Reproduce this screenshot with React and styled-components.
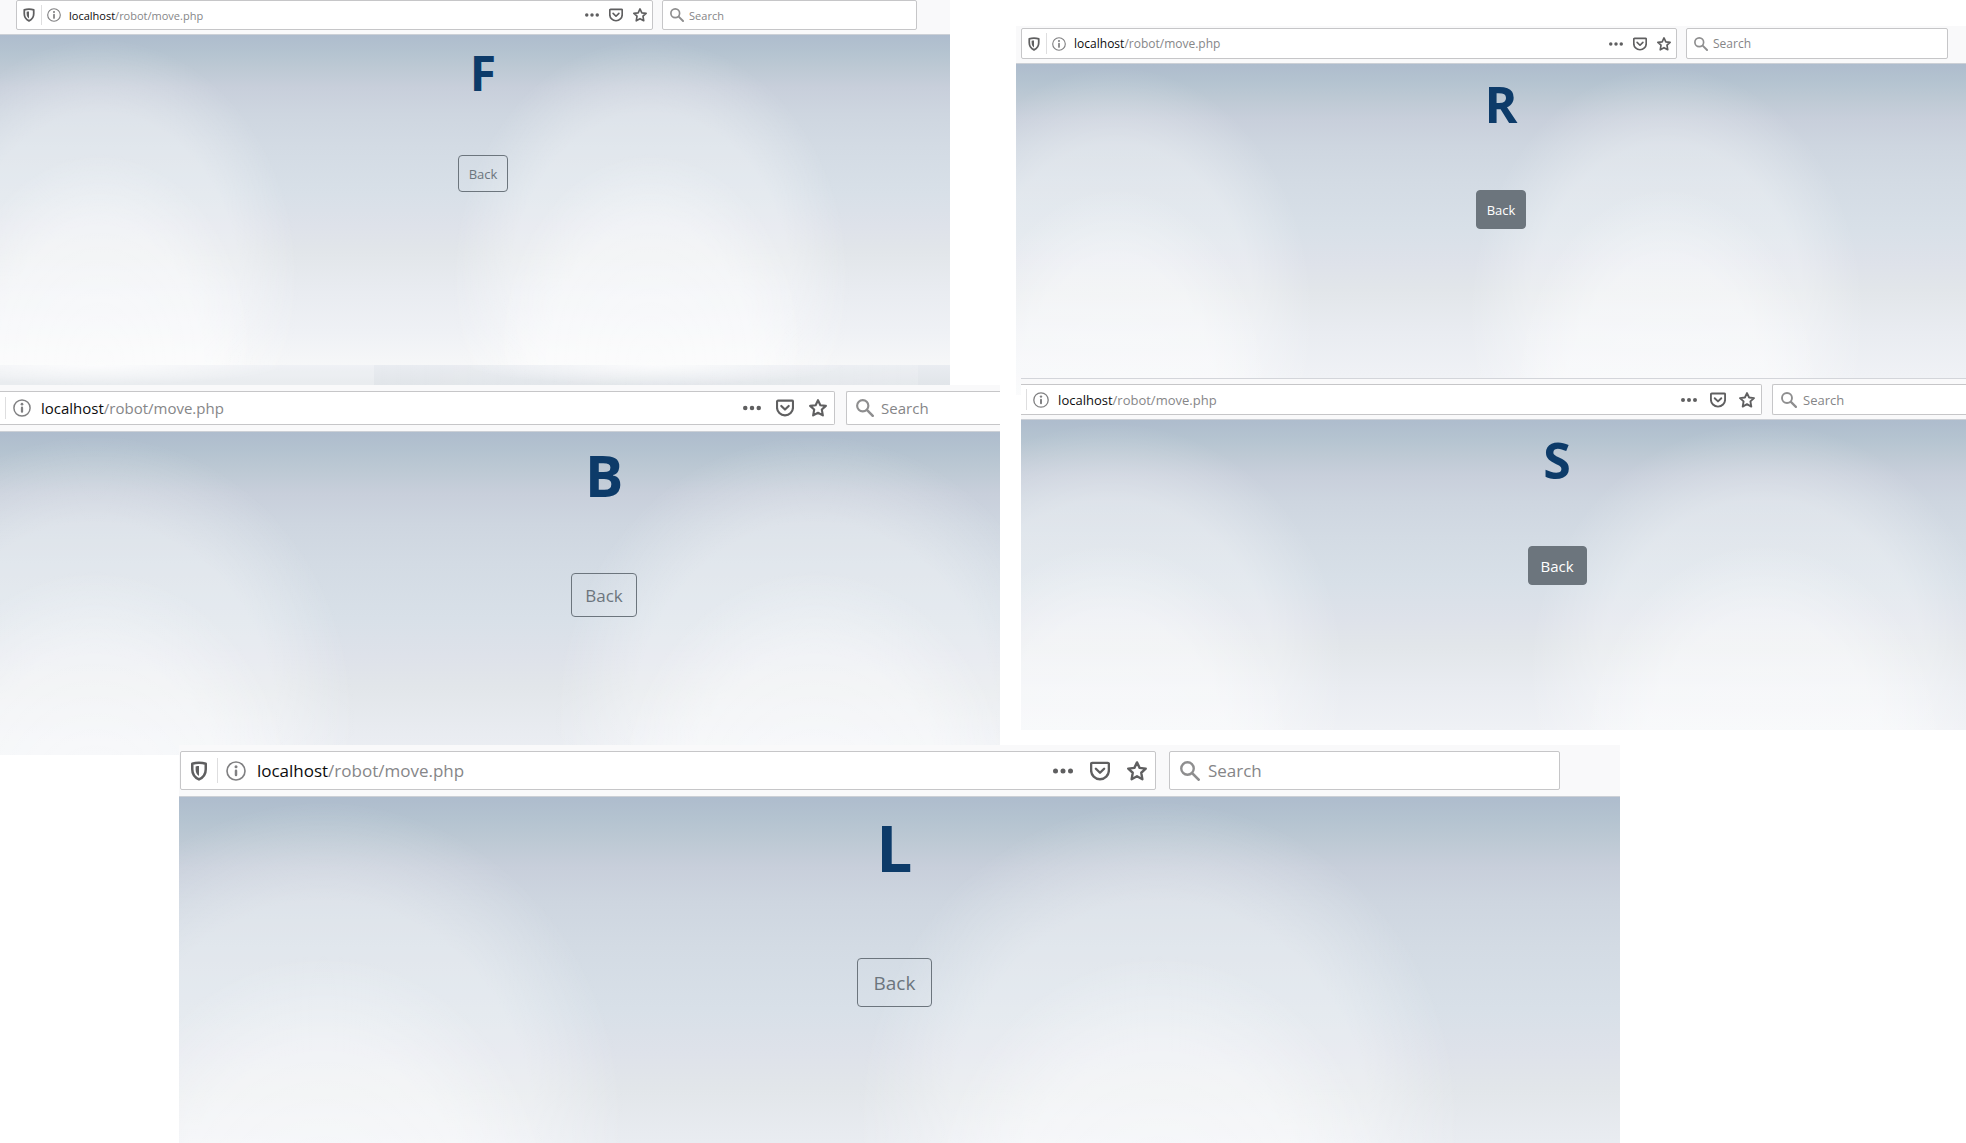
import React from 'react';
import styled, { createGlobalStyle, css } from 'styled-components';

const GlobalStyle = createGlobalStyle`
  *, *::before, *::after { box-sizing: border-box; }
  body {
    margin: 0;
    background: #fff;
    font-family: "Open Sans", "Noto Sans", sans-serif;
  }
  button, input { font: inherit; }
`;

/* Each window is the same page seen at another zoom level. */
const sizes = {
  xs: { text: 11, label: 13, icon: 14, gap: 5, action: 10, box: 30, title: 48, titleLine: 58, top: 9, drop: 53, btnW: 50, btnH: 37, tile: 330 },
  sm: { text: 12, label: 13, icon: 14, gap: 5, action: 10, box: 31, title: 50, titleLine: 60, top: 10, drop: 56, btnW: 50, btnH: 39, tile: 344 },
  md: { text: 13, label: 15, icon: 16, gap: 6, action: 13, box: 31, title: 50, titleLine: 60, top: 10, drop: 56, btnW: 59, btnH: 39, tile: 344 },
  lg: { text: 15, label: 17, icon: 18, gap: 7, action: 15, box: 34, title: 57, titleLine: 68, top: 9, drop: 64, btnW: 66, btnH: 44, tile: 387 },
  xl: { text: 17, label: 19, icon: 20, gap: 8, action: 17, box: 39, title: 64, titleLine: 76, top: 13, drop: 72, btnW: 75, btnH: 49, tile: 442 },
};

const Desktop = styled.main`
  display: flex;
  flex-direction: column;
  overflow: hidden;
`;

const TopRow = styled.div`
  display: grid;
  grid-template-columns: 50.87% 1fr;
  align-items: start;
`;

const LeftColumn = styled.div`
  display: flex;
  flex-direction: column;
`;

const RightColumn = styled.div`
  display: flex;
  flex-direction: column;
  padding: 26px 0 0 16px;
`;

const Window = styled.section`
  width: ${(p) => p.$width || 'auto'};
  margin: ${(p) => p.$margin || '0'};
`;

const Toolbar = styled.header`
  display: flex;
  gap: ${(p) => p.$gap}px;
  padding: ${(p) => p.$padding};
  background: #f9f9fa;
  border-top: ${(p) => (p.$line ? '1px solid #d3d5da' : 'none')};
  border-bottom: 1px solid #ccd0d6;
`;

const field = css`
  display: flex;
  align-items: center;
  min-width: 0;
  height: ${(p) => p.$s.box}px;
  background: #fff;
  border: 1px solid #c6c6c8;
  border-radius: 2px;
`;

const AddressBar = styled.div`
  ${field}
  flex: 1;
  gap: ${(p) => p.$s.gap}px;
  padding: 0 ${(p) => p.$s.gap}px;
  ${(p) => p.$cut && css`
    border-left: 0;
    border-radius: 0 2px 2px 0;
    padding-left: 5px;
  `}
`;

const SearchBox = styled.label`
  ${field}
  flex: 0 0 ${(p) => p.$width}px;
  gap: ${(p) => p.$s.gap}px;
  padding-left: ${(p) => p.$s.gap + 2}px;
  color: #8e8e8f;
  ${(p) => p.$cut && css`
    border-right: 0;
    border-radius: 2px 0 0 2px;
  `}
`;

const SearchInput = styled.input`
  flex: 1;
  width: 0;
  min-width: 0;
  padding: 0;
  border: 0;
  outline: 0;
  background: none;
  font-size: ${(p) => p.$s.text}px;
  color: #1a1a1a;
  &::placeholder { color: #858587; opacity: 1; }
`;

const Address = styled.a`
  flex: 1;
  padding-left: 3px;
  font-size: ${(p) => p.$s.text}px;
  white-space: nowrap;
  color: #868688;
  text-decoration: none;
`;

const Host = styled.span`
  color: #0c0c0d;
`;

const Separator = styled.span`
  width: 1px;
  height: 70%;
  background: #dededf;
`;

const IconButton = styled.button`
  display: flex;
  padding: 0;
  border: 0;
  background: none;
  color: ${(p) => (p.$soft ? '#808082' : '#5f5f60')};
`;

const Actions = styled.div`
  display: flex;
  gap: ${(p) => p.$s.action}px;
`;

const Glyph = styled.svg`
  display: block;
  flex: none;
  width: ${(p) => p.$s.icon}px;
  height: ${(p) => p.$s.icon}px;
  fill: none;
  stroke: currentColor;
  stroke-width: 1.9;
  stroke-linecap: round;
  stroke-linejoin: round;
`;

const glow = (center, period, tile) => `
  radial-gradient(ellipse ${period * 0.28}% ${Math.round(tile * 0.64)}px at ${center}% ${Math.round(tile)}px,
    rgba(255,255,255,.42) 0, rgba(255,255,255,.38) 66%, rgba(255,255,255,.18) 84%, rgba(255,255,255,0) 100%),
  radial-gradient(ellipse ${period * 0.36}% ${Math.round(tile * 0.74)}px at ${center}% ${Math.round(tile * 0.75)}px,
    rgba(255,255,255,.32) 0, rgba(255,255,255,.32) 70%, rgba(255,255,255,.15) 86%, rgba(255,255,255,0) 100%)
`;

const View = styled.div`
  display: flex;
  flex-direction: column;
  align-items: center;
  gap: ${(p) => p.$s.drop}px;
  min-height: ${(p) => p.$height}px;
  padding: ${(p) => p.$s.top}px ${(p) => p.$right || 0}px 0 ${(p) => p.$left || 0}px;
  background:
    ${(p) => glow(p.$first, p.$period, p.$s.tile)},
    ${(p) => glow(p.$first + p.$period, p.$period, p.$s.tile)},
    linear-gradient(#aebccd 0, #b4c3d0 5%, #bdc9d4 10%, #c8cfdb 16%, #ced6e0 24%, #d3dbe4 34%,
      #d8e0e8 48%, #dee2ea 58%, #e2e6ea 66%, #e9ecf1 78%, #eff1f5 90%, #f6f7f8 100%);
  background-size: 100% ${(p) => p.$s.tile}px;
`;

const Title = styled.h1`
  margin: 0;
  font-size: ${(p) => p.$s.title}px;
  line-height: ${(p) => p.$s.titleLine}px;
  font-weight: 700;
  color: #0d3b69;
`;

const BackButton = styled.button`
  width: ${(p) => p.$s.btnW}px;
  height: ${(p) => p.$s.btnH}px;
  padding: 0;
  border: 1px solid #6c757d;
  border-radius: 4px;
  font-size: ${(p) => p.$s.label}px;
  background: ${(p) => (p.$filled ? '#6c757d' : 'transparent')};
  color: ${(p) => (p.$filled ? '#fff' : '#6c757d')};
`;

const RepeatEdge = styled.div`
  height: 20px;
  background:
    radial-gradient(ellipse 20% 20px at 10% 0, rgba(255,255,255,.8), rgba(255,255,255,0)),
    radial-gradient(ellipse 20% 20px at 69% 0, rgba(255,255,255,.8), rgba(255,255,255,0)),
    linear-gradient(90deg, rgba(255,255,255,.25) 39.4%, rgba(255,255,255,0) 39.4%, rgba(255,255,255,.15) 96.6%, rgba(255,255,255,0) 96.6%),
    linear-gradient(#e9ecf1, #e1e5e9);
`;

const Shield = ({ s }) => (
  <Glyph $s={s} viewBox="0 0 16 16" aria-hidden="true">
    <path strokeWidth="2" d="M8 1.3c2 0 3.8.3 5.4.9v4.3c0 4-2 6.6-5.4 8.2-3.4-1.6-5.4-4.2-5.4-8.2V2.2C4.2 1.6 6 1.3 8 1.3z" />
    <path fill="currentColor" stroke="none" d="M8 4v8c-1.9-1.2-2.7-3-2.7-5.3V4.4C6.1 4.1 7 4 8 4z" />
  </Glyph>
);

const Info = ({ s }) => (
  <Glyph $s={s} viewBox="0 0 16 16" aria-hidden="true">
    <circle cx="8" cy="8" r="7.2" strokeWidth="1.3" />
    <circle cx="8" cy="4.6" r="1.2" fill="currentColor" stroke="none" />
    <path strokeWidth="2" d="M8 7.7v3.6" />
  </Glyph>
);

const Dots = ({ s }) => (
  <Glyph $s={s} viewBox="0 0 16 16" aria-hidden="true">
    <g fill="currentColor" stroke="none">
      <circle cx="2" cy="8" r="2" />
      <circle cx="8" cy="8" r="2" />
      <circle cx="14" cy="8" r="2" />
    </g>
  </Glyph>
);

const Pocket = ({ s }) => (
  <Glyph $s={s} viewBox="0 0 16 16" aria-hidden="true">
    <path d="M1.8 1.5h12.4c.5 0 .9.4.9.9V7.5a7.1 7.1 0 0 1-14.2 0V2.4c0-.5.4-.9.9-.9z" />
    <path d="M4.7 6.2 8 9.4l3.3-3.2" />
  </Glyph>
);

const Star = ({ s }) => (
  <Glyph $s={s} viewBox="0 0 16 16" aria-hidden="true">
    <path d="m8 1.1 2.1 4.4 4.9.6-3.6 3.3.9 5.2L8 12.2l-4.3 2.4.9-5.2L1 6.1l4.9-.6z" />
  </Glyph>
);

const Magnifier = ({ s }) => (
  <Glyph $s={s} viewBox="0 0 16 16" aria-hidden="true">
    <circle cx="6" cy="6" r="5" />
    <path strokeWidth="2.2" d="m9.9 9.9 5 5" />
  </Glyph>
);

function BrowserWindow({ letter, size, filled, cut, cutSearch, toolbar, search, view, width, margin, children }) {
  const s = sizes[size];
  return (
    <Window $width={width} $margin={margin}>
      <Toolbar $gap={toolbar.gap} $padding={toolbar.padding} $line={toolbar.line}>
        <AddressBar $s={s} $cut={cut}>
          {!cut && (
            <IconButton type="button" aria-label="Tracking protection"><Shield s={s} /></IconButton>
          )}
          <Separator />
          <IconButton type="button" $soft aria-label="Site information"><Info s={s} /></IconButton>
          <Address $s={s} href="#move"><Host>localhost</Host>/robot/move.php</Address>
          <Actions $s={s}>
            <IconButton type="button" aria-label="Page actions"><Dots s={s} /></IconButton>
            <IconButton type="button" aria-label="Save to Pocket"><Pocket s={s} /></IconButton>
            <IconButton type="button" aria-label="Bookmark this page"><Star s={s} /></IconButton>
          </Actions>
        </AddressBar>
        <SearchBox $s={s} $width={search} $cut={cutSearch}>
          <Magnifier s={s} />
          <SearchInput $s={s} type="text" placeholder="Search" aria-label="Search" />
        </SearchBox>
      </Toolbar>
      <View $s={s} $height={view.height} $left={view.left} $right={view.right} $first={view.first} $period={view.period}>
        <Title $s={s}>{letter}</Title>
        <BackButton type="button" $s={s} $filled={filled}>Back</BackButton>
      </View>
      {children}
    </Window>
  );
}

export default function App() {
  return (
    <>
      <GlobalStyle />
      <Desktop>
        <TopRow>
          <LeftColumn>
            <BrowserWindow
              letter="F" size="xs" width="95%" search={255}
              toolbar={{ gap: 9, padding: '0 33px 4px 16px' }}
              view={{ height: 330, left: 16, first: 10.5, period: 58 }}
            >
              <RepeatEdge />
            </BrowserWindow>
            <BrowserWindow
              letter="B" size="lg" cut cutSearch search={154}
              toolbar={{ gap: 11, padding: '6px 0' }}
              view={{ height: 323, left: 208, first: 9.5, period: 72 }}
            />
          </LeftColumn>
          <RightColumn>
            <BrowserWindow
              letter="R" size="sm" filled search={262}
              toolbar={{ gap: 9, padding: '2px 18px 4px 5px' }}
              view={{ height: 331, left: 20, first: 10.5, period: 58 }}
            />
            <BrowserWindow
              letter="S" size="md" filled cut cutSearch search={194} margin="-17px 0 0 5px"
              toolbar={{ gap: 10, padding: '5px 0 4px', line: true }}
              view={{ height: 310, left: 127, first: 9.5, period: 69 }}
            />
          </RightColumn>
        </TopRow>
        <BrowserWindow
          letter="L" size="xl" width="73.3%" margin="-10px 0 0 9.1%" search={391}
          toolbar={{ gap: 13, padding: '6px 60px 6px 1px' }}
          view={{ height: 347, right: 10, first: 10, period: 58 }}
        />
      </Desktop>
    </>
  );
}
